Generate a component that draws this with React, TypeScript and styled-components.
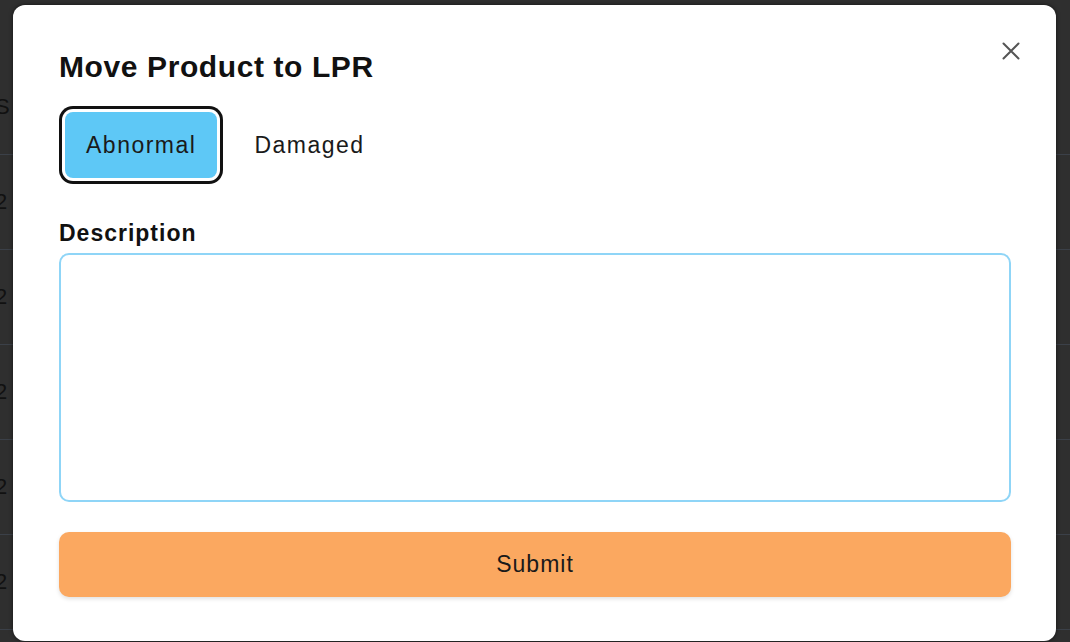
import React, { useState } from "react";
import styled, { createGlobalStyle } from "styled-components";

const Global = createGlobalStyle`
  html, body { margin: 0; padding: 0; }
  body {
    width: 1070px;
    height: 642px;
    overflow: hidden;
    background: #2f2f2f;
    font-family: "Liberation Sans", Arial, sans-serif;
  }
`;

const Page = styled.div`
  position: relative;
  width: 1070px;
  height: 642px;
  overflow: hidden;
`;

const Table = styled.div`
  display: flex;
  flex-direction: column;
  padding-top: 60px;
`;

const TableRow = styled.div`
  height: 94px;
  border-bottom: 1px solid #3b4048;
  display: flex;
  align-items: center;
  margin-left: -5px;
  color: #111;
  font-size: 22px;
`;

const Overlay = styled.div`
  position: absolute;
  inset: 0;
  display: flex;
  align-items: flex-start;
  padding: 5px 14px 0 13px;
`;

const Modal = styled.div`
  position: relative;
  flex: 1;
  height: 636px;
  box-sizing: border-box;
  background: #fff;
  border-radius: 12px;
  box-shadow: 0 0 4px rgba(0, 0, 0, 0.6);
  padding: 44px 45px 0 46px;
  display: flex;
  flex-direction: column;
`;

const Title = styled.h2`
  margin: 0;
  font-size: 30px;
  line-height: 35px;
  letter-spacing: 0.6px;
  font-weight: 700;
  color: #111;
`;

const Close = styled.button`
  position: absolute;
  top: 33px;
  right: 32px;
  width: 26px;
  height: 26px;
  padding: 0;
  border: none;
  background: transparent;
  display: flex;
  align-items: center;
  justify-content: center;
  cursor: pointer;
`;

const Toggle = styled.div`
  display: flex;
  gap: 16px;
  margin-top: 28px;
  padding-left: 6px;
`;

const Option = styled.button<{ $active?: boolean }>`
  height: 66px;
  padding: 0 21px;
  border: none;
  border-radius: 8px;
  font-family: inherit;
  font-size: 23px;
  letter-spacing: 1.5px;
  color: #1a1a1a;
  background: ${(p) => (p.$active ? "#5ec8f6" : "transparent")};
  box-shadow: ${(p) =>
    p.$active ? "0 0 0 3px #fff, 0 0 0 6px #111" : "none"};
  cursor: pointer;
`;

const Label = styled.label`
  margin-top: 42px;
  font-size: 23px;
  line-height: 26px;
  letter-spacing: 1px;
  font-weight: 700;
  color: #111;
`;

const Area = styled.textarea`
  margin-top: 7px;
  height: 249px;
  box-sizing: border-box;
  border: 2px solid #8fd5f7;
  border-radius: 10px;
  resize: none;
  outline: none;
  font-family: inherit;
  font-size: 20px;
  padding: 10px 14px;
`;

const Submit = styled.button`
  margin-top: 30px;
  height: 65px;
  border: none;
  border-radius: 10px;
  background: #fba860;
  color: #1a1a1a;
  font-family: inherit;
  font-size: 23px;
  letter-spacing: 1px;
  box-shadow: 0 2px 4px rgba(0, 0, 0, 0.12);
  cursor: pointer;
`;

export default function App() {
  const [kind, setKind] = useState<"Abnormal" | "Damaged">("Abnormal");
  return (
    <Page>
      <Global />
      <Table>
        {[0, 1, 2, 3, 4, 5].map((i) => (
          <TableRow key={i}>{i === 0 ? "S" : "2"}</TableRow>
        ))}
      </Table>
      <Overlay>
        <Modal>
          <Title>Move Product to LPR</Title>
          <Close aria-label="Close">
            <svg width="18" height="18" viewBox="0 0 18 18">
              <path
                d="M1.5 1.5 L16.5 16.5 M16.5 1.5 L1.5 16.5"
                stroke="#555"
                strokeWidth="2"
                strokeLinecap="round"
              />
            </svg>
          </Close>
          <Toggle>
            {(["Abnormal", "Damaged"] as const).map((k) => (
              <Option key={k} $active={kind === k} onClick={() => setKind(k)}>
                {k}
              </Option>
            ))}
          </Toggle>
          <Label htmlFor="desc">Description</Label>
          <Area id="desc" />
          <Submit>Submit</Submit>
        </Modal>
      </Overlay>
    </Page>
  );
}
